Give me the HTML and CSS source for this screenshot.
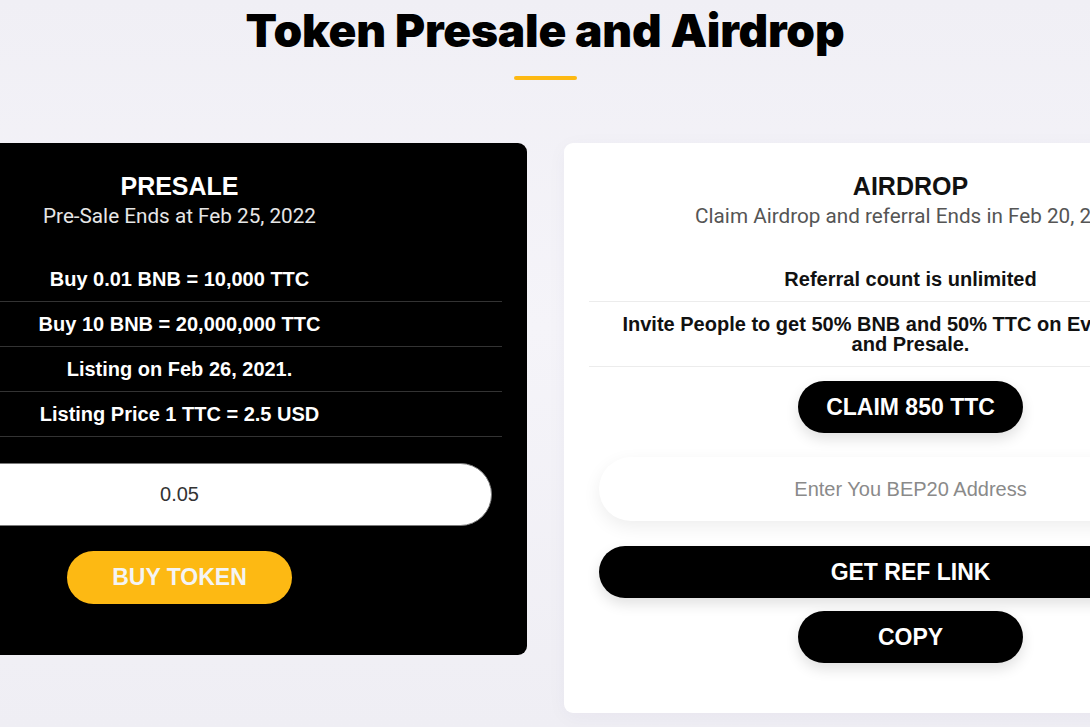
FILE: index.html
```html
<!DOCTYPE html>
<html lang="en">
<head>
<meta charset="utf-8">
<title>Token Presale and Airdrop</title>
<link rel="stylesheet" href="styles.css">
</head>
<body>
<section class="sale">
  <h1 class="sale-title">Token Presale and Airdrop</h1>
  <div class="sale-underline"></div>
  <div class="cards">
    <div class="card card-dark">
      <h2 class="card-title">PRESALE</h2>
      <p class="card-sub">Pre-Sale Ends at Feb 25, 2022</p>
      <ul class="info">
        <li class="info-row">Buy 0.01 BNB = 10,000 TTC</li>
        <li class="info-row">Buy 10 BNB = 20,000,000 TTC</li>
        <li class="info-row">Listing on Feb 26, 2021.</li>
        <li class="info-row">Listing Price 1 TTC = 2.5 USD</li>
      </ul>
      <input class="field field-dark" type="text" value="0.05">
      <button class="btn btn-yellow">BUY TOKEN</button>
    </div>
    <div class="card card-light">
      <h2 class="card-title">AIRDROP</h2>
      <p class="card-sub">Claim Airdrop and referral Ends in Feb 20, 2022</p>
      <ul class="info">
        <li class="info-row">Referral count is unlimited</li>
        <li class="info-row">Invite People to get 50% BNB and 50% TTC on Every Airdrop<br>and Presale.</li>
      </ul>
      <button class="btn btn-black btn-claim">CLAIM 850 TTC</button>
      <input class="field field-light" type="text" placeholder="Enter You BEP20 Address">
      <button class="btn btn-black btn-wide">GET REF LINK</button>
      <button class="btn btn-black btn-copy">COPY</button>
    </div>
  </div>
</section>
</body>
</html>
```
FILE: styles.css
```css
* { box-sizing: border-box; }
html, body {
  margin: 0;
  padding: 0;
}
body {
  width: 1090px;
  height: 727px;
  overflow: hidden;
  background: linear-gradient(180deg, #f0eff5 0%, #f5f4f9 45%, #efeef4 100%);
  font-family: "Liberation Sans", Arial, sans-serif;
}
.sale {
  display: flex;
  flex-direction: column;
  align-items: center;
}
.sale-title {
  margin: 0;
  padding-top: 3px;
  font-family: Inter, "Noto Sans", sans-serif;
  font-weight: 900;
  font-size: 46px;
  line-height: 54px;
  letter-spacing: -0.2px;
  color: #000;
}
.sale-underline {
  width: 63px;
  height: 4px;
  border-radius: 2px;
  background: #fdb913;
  margin-top: 19px;
}
.cards {
  width: 100%;
  display: flex;
  justify-content: center;
  align-items: flex-start;
  gap: 37px;
  margin-top: 63px;
}
.card {
  flex: 0 0 694px;
  width: 694px;
  border-radius: 9px;
  padding: 29px 25px 51px;
  display: flex;
  flex-direction: column;
  align-items: center;
  text-align: center;
}
.card-dark {
  background: #000;
  color: #fff;
}
.card-light {
  background: #fff;
  color: #111;
  padding-bottom: 50px;
  box-shadow: 0 4px 20px rgba(40, 30, 90, 0.04);
}
.card-title {
  margin: 0;
  font-size: 25px;
  line-height: 28px;
  font-weight: 700;
}
.card-sub {
  margin: 3px 0 0;
  font-family: Roboto, "Open Sans", sans-serif;
  font-weight: 400;
  font-size: 20.7px;
  line-height: 26px;
}
.card-dark .card-sub { color: #e6e6e6; }
.card-light .card-sub { color: #555; white-space: nowrap; }
.info {
  list-style: none;
  margin: 28px 0 0;
  padding: 0;
  width: 100%;
}
.info-row {
  padding: 12px 0;
  font-size: 20px;
  line-height: 20px;
  font-weight: 700;
  white-space: nowrap;
}
.card-dark .info-row { border-bottom: 1px solid #333; }
.card-light .info-row { border-bottom: 1px solid #ececec; }
.field {
  display: block;
  align-self: stretch;
  margin: 0 10px;
  border-radius: 32px;
  text-align: center;
  font-family: "Liberation Sans", Arial, sans-serif;
  font-size: 20px;
  outline: none;
}
.field-dark {
  margin-top: 26px;
  height: 63px;
  background: #fff;
  color: #333;
  border: 1px solid #7a7a7a;
}
.field-light {
  margin-top: 24px;
  height: 64px;
  background: #fff;
  color: #333;
  border: none;
  box-shadow: 0 6px 18px rgba(0, 0, 0, 0.07);
}
.field-light::placeholder { color: #8a8a8a; }
.btn {
  display: block;
  border: none;
  border-radius: 28px;
  font-family: "Liberation Sans", Arial, sans-serif;
  font-weight: 700;
  font-size: 23px;
  cursor: pointer;
}
.btn-yellow {
  margin-top: 25px;
  width: 225px;
  height: 53px;
  background: #fdb913;
  color: #f4f4f4;
}
.btn-black {
  background: #000;
  color: #fff;
  height: 52px;
  box-shadow: 0 6px 14px rgba(0, 0, 0, 0.12);
}
.btn-claim {
  margin-top: 14px;
  width: 225px;
}
.btn-wide {
  margin-top: 25px;
  align-self: stretch;
  margin-left: 10px;
  margin-right: 10px;
}
.btn-copy {
  margin-top: 13px;
  width: 225px;
}
```
